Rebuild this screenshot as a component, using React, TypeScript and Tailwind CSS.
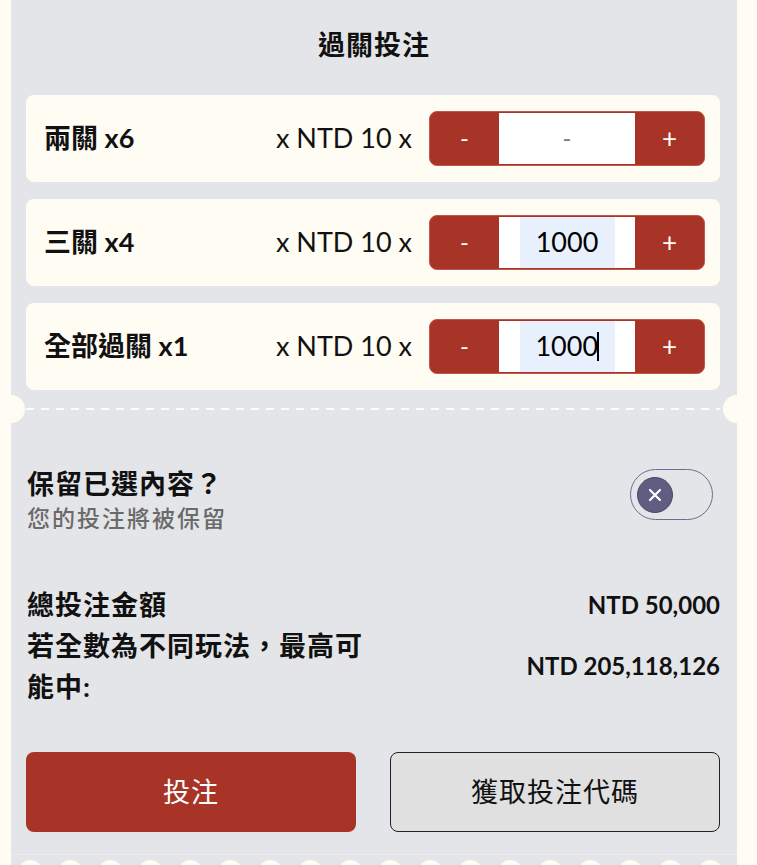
import React from "react";

const CREAM = "bg-[#fffcf3]";

function Stepper({ value, caret }: { value?: string; caret?: boolean }) {
  return (
    <div className="flex h-[55px] w-[276px] rounded-[8px] bg-[#a83427] border border-[#c2564b] overflow-hidden">
      <div className="w-[69px] flex items-center justify-center text-white text-[24px] leading-none pb-[2px]">-</div>
      <div className="flex-1 bg-white my-[1px] flex items-center justify-center">
        {value ? (
          <div className="h-full w-[95px] bg-[#e8f0fe] flex items-center justify-center text-[27px] text-black">
            <span>{value}</span>
            {caret ? <span className="inline-block w-[1.5px] h-[29px] bg-black ml-[-1px]" /> : null}
          </div>
        ) : (
          <span className="text-[24px] text-[#777] leading-none pb-[2px]">-</span>
        )}
      </div>
      <div className="w-[69px] flex items-center justify-center text-white text-[26px] leading-none pb-[2px]">+</div>
    </div>
  );
}

function Row({ label, value, caret }: { label: string; value?: string; caret?: boolean }) {
  return (
    <div className={`h-[87px] shrink-0 rounded-[8px] ${CREAM} flex items-center pl-[18px] pr-[15px]`}>
      <div className="flex-1 text-[27px] font-bold text-[#111]">{label}</div>
      <div className="text-[27px] text-[#111] mr-[17px]">x NTD 10 x</div>
      <Stepper value={value} caret={caret} />
    </div>
  );
}

export default function App() {
  const circles = Array.from({ length: 19 });
  return (
    <div className={`w-[757px] h-[865px] overflow-hidden ${CREAM} font-['Lato','Noto_Sans_CJK_TC',sans-serif] text-[#111]`}>
      <div className="ml-[11px] w-[726px] h-[865px] bg-[#e4e5e8] flex flex-col relative">
        {/* title */}
        <div className="h-[95px] shrink-0 pt-[26px] text-center text-[27px] tracking-[1px] font-bold leading-[38px]">過關投注</div>

        {/* rows */}
        <div className="shrink-0 pl-[15px] pr-[17px] flex flex-col gap-[17px]">
          <Row label="兩關 x6" />
          <Row label="三關 x4" value="1000" />
          <Row label="全部過關 x1" value="1000" caret />
        </div>

        {/* separator */}
        <div className="shrink-0 relative h-[38px]">
          <div className="absolute left-[15px] right-[17px] top-[18px] h-[2px] bg-[linear-gradient(to_right,#fffcf3_8px,transparent_8px)] bg-[length:15px_2px] bg-repeat-x" />
          <div className={`absolute left-[-14px] top-[5px] w-[28px] h-[28px] rounded-full ${CREAM}`} />
          <div className={`absolute right-[-14px] top-[5px] w-[28px] h-[28px] rounded-full ${CREAM}`} />
        </div>

        {/* keep selection */}
        <div className="shrink-0 mt-[38px] pl-[16px] pr-[24px] flex justify-between items-start">
          <div>
            <div className="text-[27px] tracking-[1px] font-bold leading-[36px]">保留已選內容？</div>
            <div className="text-[23px] font-medium text-[#6a6a6a] leading-[32px] tracking-[2px]">您的投注將被保留</div>
          </div>
          <div className="mt-[3px] w-[83px] h-[51px] rounded-full border-[1.5px] border-[#6f6d8e] flex items-center pl-[6px]">
            <div className="w-[36px] h-[36px] rounded-full bg-[#5f5d80] border border-[#4a4868] flex items-center justify-center">
              <svg width="16" height="16" viewBox="0 0 16 16" fill="none" stroke="white" strokeWidth="2.2" strokeLinecap="round">
                <path d="M3 3L13 13M13 3L3 13" />
              </svg>
            </div>
          </div>
        </div>

        {/* summary */}
        <div className="shrink-0 mt-[51px] pl-[16px] pr-[17px]">
          <div className="flex justify-between items-center h-[40px]">
            <div className="text-[27px] tracking-[1px] font-bold">總投注金額</div>
            <div className="text-[24px] font-bold">NTD 50,000</div>
          </div>
          <div className="flex justify-between items-center">
            <div className="w-[347px] text-[27px] tracking-[1px] font-bold leading-[41px]">若全數為不同玩法，最高可能中:</div>
            <div className="text-[24px] font-bold">NTD 205,118,126</div>
          </div>
        </div>

        {/* buttons */}
        <div className="shrink-0 mt-[45px] pl-[15px] pr-[17px] grid grid-cols-2 gap-[34px]">
          <div className="h-[80px] rounded-[8px] bg-[#a83427] text-white text-[27px] tracking-[1px] flex items-center justify-center">投注</div>
          <div className="h-[80px] rounded-[8px] bg-[#e0e0e0] border border-[#222] text-[27px] tracking-[1px] flex items-center justify-center">獲取投注代碼</div>
        </div>

        {/* perforation */}
        <div className="shrink-0 mt-[22px] border-t border-[#ecedef] flex gap-[15px] pl-[7px] pt-[5px]">
          {circles.map((_, i) => (
            <div key={i} className={`shrink-0 w-[25px] h-[25px] rounded-full ${CREAM}`} />
          ))}
        </div>
      </div>
    </div>
  );
}
